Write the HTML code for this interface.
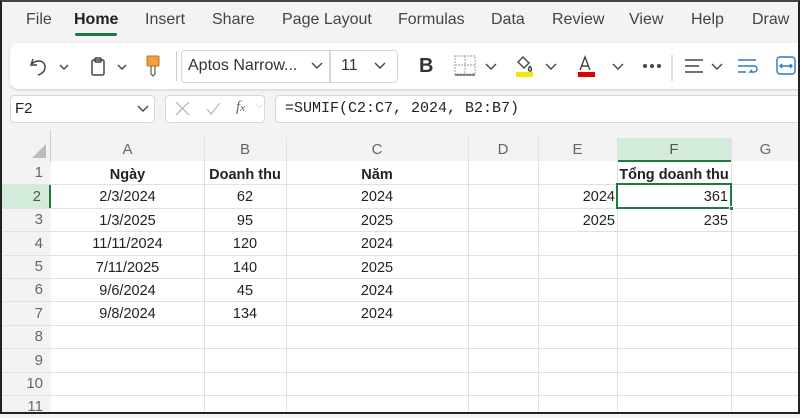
<!DOCTYPE html>
<html><head><meta charset="utf-8"><style>
*{margin:0;padding:0;box-sizing:border-box}
body{width:800px;height:414px;overflow:hidden;background:#f3f3f3;font-family:"Liberation Sans",sans-serif;position:relative}
.frame{position:absolute;left:0;top:0;width:800px;height:414px;border:2px solid #222;border-top:2px solid #444;z-index:20;pointer-events:none}
.tab{position:absolute;top:11px;font-size:16px;color:#444}
.ribbon{position:absolute;left:10px;top:43px;width:800px;height:46px;background:#fff;border-radius:8px;box-shadow:0 1px 2px rgba(0,0,0,.15)}
.a{position:absolute}
.box{position:absolute;background:#fff;border:1px solid #d6d6d6;border-radius:4px}
.grid{position:absolute;left:0;top:130px;width:800px;height:284px;background:#fff}
.cell{position:absolute;font-size:14.5px;color:#222;height:23.4px;line-height:23.4px}
.rh{position:absolute;left:0;width:51px;text-align:right;padding-right:8px;font-size:15px;color:#666;background:#f3f3f3}
.ch{position:absolute;top:8px;height:23px;line-height:23px;text-align:center;font-size:15px;color:#666;background:#f3f3f3}
svg{position:absolute}
</style></head><body>
<div class="tab" style="left:26px">File</div>
<div class="tab" style="left:74px;color:#222;font-weight:bold">Home</div>
<div style="position:absolute;left:75px;top:33px;width:42px;height:3px;background:#1e7a3e;border-radius:2px"></div>
<div class="tab" style="left:145px">Insert</div>
<div class="tab" style="left:212px">Share</div>
<div class="tab" style="left:282px">Page Layout</div>
<div class="tab" style="left:398px">Formulas</div>
<div class="tab" style="left:491px">Data</div>
<div class="tab" style="left:552px">Review</div>
<div class="tab" style="left:629px">View</div>
<div class="tab" style="left:691px">Help</div>
<div class="tab" style="left:752px">Draw</div>

<div class="ribbon"></div>
<svg style="left:28px;top:55px" width="110" height="24" viewBox="0 0 110 24" fill="none" stroke="#444" stroke-width="1.5">
<path d="M5 4 L3 10 L9 10 M3 10 C8 4 17 5 17 12 C17 17 13 19 10 20"/>
<path d="M32 10 l4 4 l4-4"/>
<rect x="64" y="5" width="12" height="15" rx="1.5"/><rect x="67" y="3" width="6" height="4" rx="1"/>
<path d="M90 10 l4 4 l4-4"/>
</svg>
<svg style="left:143px;top:54px" width="20" height="24" viewBox="0 0 20 24"><rect x="4" y="2" width="12" height="10" rx="1" fill="#f0a040" stroke="#c07020"/><path d="M8 12 v8 l2 2 l2-2 v-8" fill="none" stroke="#666" stroke-width="1.3"/></svg>
<div style="position:absolute;left:176px;top:51px;width:1px;height:30px;background:#ccc"></div>
<div class="box" style="left:181px;top:50px;width:149px;height:33px;border-radius:4px 0 0 4px"></div>
<div class="a" style="left:188px;top:57px;font-size:16px;color:#333">Aptos Narrow...</div>
<svg style="left:310px;top:60px" width="14" height="12"><path d="M2 3 l5 5 l5-5" fill="none" stroke="#444" stroke-width="1.4"/></svg>
<div class="box" style="left:330px;top:50px;width:68px;height:33px;border-radius:0 4px 4px 0"></div>
<div class="a" style="left:341px;top:57px;font-size:16px;color:#333">11</div>
<svg style="left:373px;top:60px" width="14" height="12"><path d="M2 3 l5 5 l5-5" fill="none" stroke="#444" stroke-width="1.4"/></svg>
<div class="a" style="left:419px;top:55px;font-size:20px;font-weight:bold;color:#333">B</div>
<svg style="left:450px;top:52px" width="350" height="30" viewBox="0 0 350 30" fill="none" stroke="#444" stroke-width="1.4">
<rect x="5" y="4" width="20" height="18" stroke="#bbb" stroke-dasharray="2 1"/><path d="M15 4 v18 M5 13 h20" stroke="#bbb" stroke-dasharray="2 1"/><path d="M5 23 h20" stroke="#666" stroke-width="1.5"/>
<path d="M36 12 l5 5 l5-5"/>
<path d="M68 10 l5-5 l6 6 l-5 5 z M80 14 c2 3 2 5 0 5 c-2 0 -2-2 0-5"/><rect x="66" y="20" width="17" height="5" fill="#f5e800" stroke="none"/>
<path d="M96 12 l5 5 l5-5"/>
<path d="M130 18 l5-13 l5 13 M132 14 h6"/><rect x="128" y="20" width="17" height="5" fill="#e00000" stroke="none"/>
<path d="M163 12 l5 5 l5-5"/>
<circle cx="195" cy="14" r="1.3" fill="#444"/><circle cx="202" cy="14" r="1.3" fill="#444"/><circle cx="209" cy="14" r="1.3" fill="#444"/>
<path d="M222 3 v26" stroke="#ccc"/>
<path d="M235 8 h18 M235 14 h14 M235 20 h18"/>
<path d="M262 12 l5 5 l5-5"/>
<path d="M288 8 h18 M288 14 h16 c4 0 4 6 0 6 h-4 l2-2 M288 20 h8" stroke="#2a78c8"/>
<rect x="327" y="5" width="18" height="17" rx="3" stroke="#2a78c8"/><path d="M330 14 h12 M332 12 l-2 2 l2 2 M340 12 l2 2 l-2 2" stroke="#2a78c8"/>
</svg>

<div class="box" style="left:10px;top:95px;width:145px;height:28px"></div>
<div class="a" style="left:15px;top:100px;font-size:15px;color:#222">F2</div>
<svg style="left:136px;top:103px" width="14" height="12"><path d="M2 3 l5 5 l5-5" fill="none" stroke="#444" stroke-width="1.4"/></svg>
<div class="box" style="left:165px;top:95px;width:100px;height:28px"></div>
<svg style="left:170px;top:98px" width="95" height="22" fill="none" stroke="#bbb" stroke-width="1.3"><path d="M6 4 l13 13 M19 4 l-13 13 M37 11 l4 5 l9-11"/></svg>
<div class="a" style="left:236px;top:99px;font-size:15px;font-style:italic;color:#666;font-family:'Liberation Serif',serif">f<span style="font-size:11px">x</span></div>
<div class="a" style="left:256px;top:100px;font-size:9px;color:#aaa">⌵</div>
<div class="box" style="left:275px;top:95px;width:530px;height:28px"></div>
<div class="a" style="left:285px;top:100px;font-size:15px;color:#222;font-family:'Liberation Mono',monospace">=SUMIF(C2:C7, 2024, B2:B7)</div>

<div class="grid">
<div class="a" style="left:0;top:0;width:800px;height:31px;background:#f3f3f3;border-bottom:1px solid #ccc"></div>
<div class="a" style="left:0;top:0;width:51px;height:284px;background:#f3f3f3;border-right:1px solid #ccc"></div>
<svg style="left:30px;top:12px" width="18" height="18"><path d="M16 2 V16 H2 Z" fill="#bbb"/></svg>
<div class="ch" style="left:51px;width:153px">A</div>
<div class="ch" style="left:204px;width:82px">B</div>
<div class="ch" style="left:286px;width:182px">C</div>
<div class="ch" style="left:468px;width:70px">D</div>
<div class="ch" style="left:538px;width:79px">E</div>
<div class="ch" style="left:617px;width:114px;background:#d2ebdb;border-bottom:2px solid #1e7a3e;height:24px;color:#555">F</div>
<div class="ch" style="left:731px;width:69px">G</div>
<svg style="left:0;top:0" width="800" height="284">
<g stroke="#e1e1e1" stroke-width="1">
<path d="M204.5 8 V284 M286.5 8 V284 M468.5 8 V284 M538.5 8 V284 M617.5 8 V284 M731.5 8 V284"/>
<path d="M51 54.5 H800 M51 78.5 H800 M51 101.5 H800 M51 125.5 H800 M51 148.5 H800 M51 171.5 H800 M51 195.5 H800 M51 218.5 H800 M51 242.5 H800 M51 265.5 H800"/>
<path d="M0 54.5 H51 M0 78.5 H51 M0 101.5 H51 M0 125.5 H51 M0 148.5 H51 M0 171.5 H51 M0 195.5 H51 M0 218.5 H51 M0 242.5 H51 M0 265.5 H51"/>
</g>
</svg>
<div class="rh" style="top:32px;height:22px;line-height:22px">1</div>
<div class="rh" style="top:55px;height:23px;line-height:23px;background:#d2ebdb;border-right:2px solid #1e7a3e;color:#555">2</div>
<div class="rh" style="top:79px;height:22px;line-height:22px">3</div>
<div class="rh" style="top:102px;height:23px;line-height:23px">4</div>
<div class="rh" style="top:126px;height:22px;line-height:22px">5</div>
<div class="rh" style="top:149px;height:22px;line-height:22px">6</div>
<div class="rh" style="top:172px;height:23px;line-height:23px">7</div>
<div class="rh" style="top:196px;height:22px;line-height:22px">8</div>
<div class="rh" style="top:219px;height:23px;line-height:23px">9</div>
<div class="rh" style="top:243px;height:22px;line-height:22px">10</div>
<div class="rh" style="top:266px;height:22px;line-height:22px">11</div>

<div style="position:absolute;font-weight:bold;font-size:14.5px;color:#222;top:34px;line-height:22px">
<div class="a" style="left:51px;width:153px;text-align:center">Ngày</div>
<div class="a" style="left:204px;width:82px;text-align:center;white-space:nowrap">Doanh thu</div>
<div class="a" style="left:286px;width:182px;text-align:center">Năm</div>
<div class="a" style="left:617px;width:114px;text-align:center;white-space:nowrap">Tổng doanh thu</div>
</div>
<div style="position:absolute;left:0;top:3px;font-size:14.5px;color:#222">
<div class="a" style="left:51px;width:153px;text-align:center;top:56px">2/3/2024</div>
<div class="a" style="left:51px;width:153px;text-align:center;top:80px">1/3/2025</div>
<div class="a" style="left:51px;width:153px;text-align:center;top:103px">11/11/2024</div>
<div class="a" style="left:51px;width:153px;text-align:center;top:127px">7/11/2025</div>
<div class="a" style="left:51px;width:153px;text-align:center;top:150px">9/6/2024</div>
<div class="a" style="left:51px;width:153px;text-align:center;top:173px">9/8/2024</div>
<div class="a" style="left:204px;width:82px;text-align:center;top:56px">62</div>
<div class="a" style="left:204px;width:82px;text-align:center;top:80px">95</div>
<div class="a" style="left:204px;width:82px;text-align:center;top:103px">120</div>
<div class="a" style="left:204px;width:82px;text-align:center;top:127px">140</div>
<div class="a" style="left:204px;width:82px;text-align:center;top:150px">45</div>
<div class="a" style="left:204px;width:82px;text-align:center;top:173px">134</div>
<div class="a" style="left:286px;width:182px;text-align:center;top:56px">2024</div>
<div class="a" style="left:286px;width:182px;text-align:center;top:80px">2025</div>
<div class="a" style="left:286px;width:182px;text-align:center;top:103px">2024</div>
<div class="a" style="left:286px;width:182px;text-align:center;top:127px">2025</div>
<div class="a" style="left:286px;width:182px;text-align:center;top:150px">2024</div>
<div class="a" style="left:286px;width:182px;text-align:center;top:173px">2024</div>
<div class="a" style="left:538px;width:77px;text-align:right;top:56px">2024</div>
<div class="a" style="left:538px;width:77px;text-align:right;top:80px">2025</div>
<div class="a" style="left:617px;width:111px;text-align:right;top:56px">361</div>
<div class="a" style="left:617px;width:111px;text-align:right;top:80px">235</div>
</div>
<div class="a" style="left:616px;top:53px;width:116px;height:26px;border:2px solid #1e7a3e"></div>
<div class="a" style="left:729px;top:76px;width:5px;height:5px;background:#1e7a3e;border:1px solid #fff"></div>
</div>
<div class="frame"></div>
</body></html>
